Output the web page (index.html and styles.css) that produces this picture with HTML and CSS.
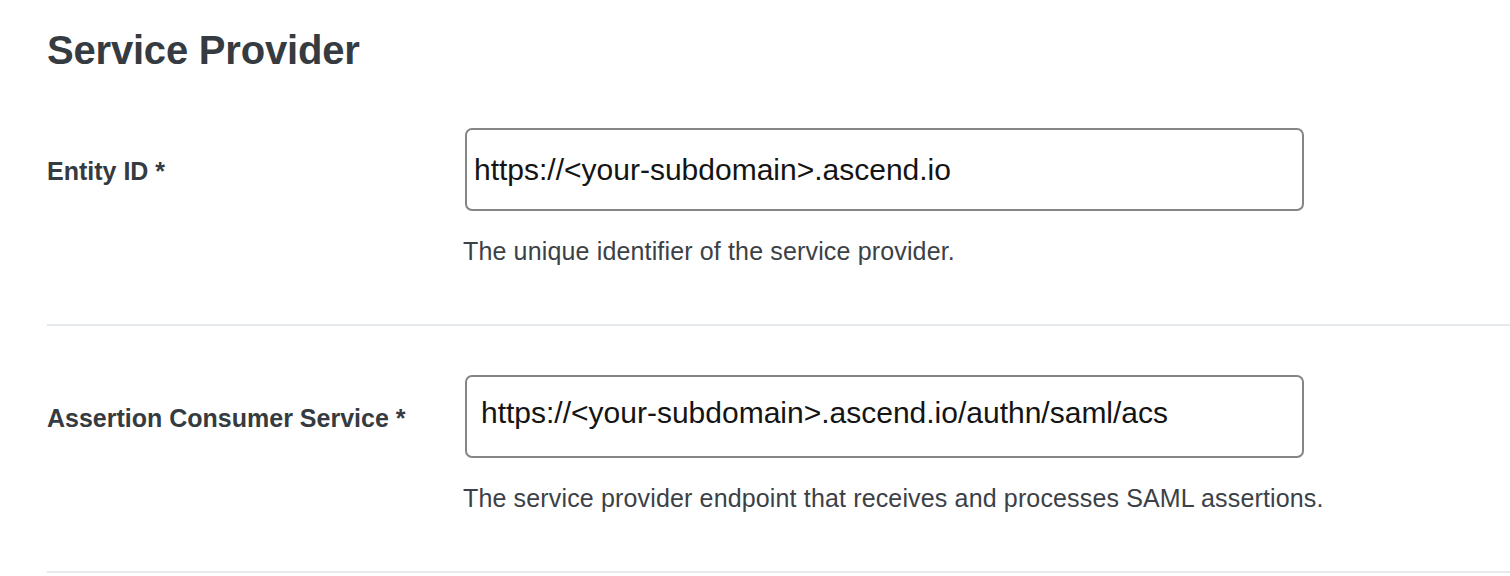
FILE: index.html
```html
<!DOCTYPE html>
<html lang="en">
<head>
<meta charset="utf-8">
<title>Service Provider</title>
<link rel="stylesheet" href="styles.css">
</head>
<body>
<main class="page">
  <h1 class="title">Service Provider</h1>
  <section class="row">
    <label class="label" for="entity">Entity ID *</label>
    <div class="input input-a" id="entity">https://&lt;your-subdomain&gt;.ascend.io</div>
    <p class="help">The unique identifier of the service provider.</p>
  </section>
  <section class="row">
    <label class="label" for="acs">Assertion Consumer Service *</label>
    <div class="input input-b" id="acs">https://&lt;your-subdomain&gt;.ascend.io/authn/saml/acs</div>
    <p class="help">The service provider endpoint that receives and processes SAML assertions.</p>
  </section>
</main>
</body>
</html>
```
FILE: styles.css
```css
html, body {
  margin: 0;
  padding: 0;
  background: #ffffff;
}
body {
  font-family: "Liberation Sans", Arial, Helvetica, sans-serif;
  overflow: hidden;
}
.page {
  padding: 26px 0 0 47px;
}
.title {
  margin: 0 0 5px 0;
  font-size: 40px;
  line-height: 48px;
  font-weight: 700;
  letter-spacing: -0.2px;
  color: #353b40;
}
.row {
  display: grid;
  grid-template-columns: 418px 839px;
  grid-template-rows: auto auto;
  padding: 49px 0 58px 0;
  border-bottom: 2px solid #e7eaed;
}
.label {
  grid-column: 1;
  grid-row: 1;
  align-self: center;
  padding-top: 3px;
  font-size: 25px;
  line-height: 30px;
  font-weight: 700;
  color: #353b40;
  white-space: nowrap;
}
.input {
  grid-column: 2;
  grid-row: 1;
  box-sizing: border-box;
  height: 83px;
  border: 2px solid #858585;
  border-radius: 7px;
  display: flex;
  align-items: center;
  font-size: 30px;
  color: #141414;
  white-space: nowrap;
}
.input-a {
  padding: 0 0 0 7px;
}
.input-b {
  padding: 0 0 8px 14px;
}
.help {
  grid-column: 2;
  grid-row: 2;
  margin: 25px 0 0 -2px;
  font-size: 25px;
  line-height: 30px;
  letter-spacing: 0.15px;
  color: #3b4146;
  white-space: nowrap;
}
```
